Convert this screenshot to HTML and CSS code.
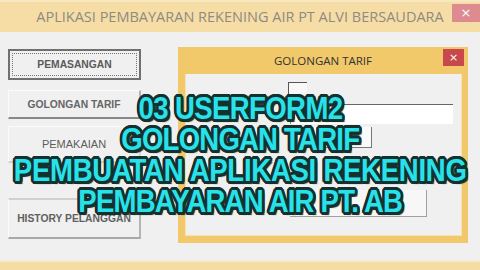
FILE: index.html
```html
<!DOCTYPE html>
<html>
<head>
<meta charset="utf-8">
<link rel="stylesheet" href="styles.css">
</head>
<body>
<div class="app">
  <div class="titlebar">
    <div class="title">APLIKASI PEMBAYARAN REKENING AIR PT ALVI BERSAUDARA</div>
    <div class="close main-close">×</div>
  </div>
  <div class="main">
    <div class="menu">
      <div class="btn btn-focus"><span class="focus-ring">PEMASANGAN</span></div>
      <div class="btn btn-gol">GOLONGAN TARIF</div>
      <div class="btn btn-pak">PEMAKAIAN</div>
      <div class="btn btn-his">HISTORY PELANGGAN</div>
    </div>
    <div class="win">
      <div class="win-title">
        <div class="win-caption">GOLONGAN TARIF</div>
        <div class="close win-close">×</div>
      </div>
      <div class="win-body">
        <div class="ctl ctl-label"></div>
        <div class="ctl ctl-text1"></div>
        <div class="ctl ctl-text2"></div>
        <div class="ctl ctl-btn"></div>
      </div>
    </div>
  </div>
  <div class="bottombar"></div>
</div>
<div class="overlay">
  <div class="ov-line ov1">03 USERFORM2</div>
  <div class="ov-line ov2">GOLONGAN TARIF</div>
  <div class="ov-line ov3">PEMBUATAN APLIKASI REKENING</div>
  <div class="ov-line ov4">PEMBAYARAN AIR PT. AB</div>
</div>
</body>
</html>
```

FILE: styles.css
```css
html, body {
  margin: 0;
  padding: 0;
}
body {
  width: 480px;
  height: 270px;
  overflow: hidden;
  position: relative;
  background: #f0f0f0;
  font-family: "Liberation Sans", Arial, sans-serif;
}
.app {
  display: flex;
  flex-direction: column;
  height: 270px;
}
.titlebar {
  height: 32px;
  flex: none;
  display: flex;
  background: #f6dda5;
  border-top: 2px solid #f8e8c2;
  box-sizing: border-box;
  padding-left: 28px;
}
.title {
  flex: 1;
  text-align: center;
  font-family: "Open Sans", sans-serif;
  font-size: 14.5px;
  line-height: 30px;
  color: #8e8b82;
  white-space: nowrap;
}
.close {
  color: #fff;
  text-align: center;
  font-family: "DejaVu Sans", sans-serif;
}
.main-close {
  width: 28px;
  height: 18px;
  margin-top: 2px;
  background: #dc8c90;
  font-size: 13px;
  line-height: 18px;
}
.main {
  flex: 1;
  display: flex;
  align-items: flex-start;
  padding: 16px 0 0 8px;
  background: #f0f0f0;
}
.menu {
  width: 133px;
  display: flex;
  flex-direction: column;
  margin-top: 1px;
}
.btn {
  box-sizing: border-box;
  display: flex;
  align-items: center;
  justify-content: center;
  font-size: 10.3px;
  font-weight: bold;
  color: #666;
  background: #f0f0f0;
  border-top: 1px solid #fbfbfb;
  border-left: 1px solid #fbfbfb;
  border-right: 2px solid #b4b4b4;
  border-bottom: 2px solid #a8a8a8;
}
.btn-focus {
  height: 31px;
  border: 2px solid #707070;
  padding: 2px;
  color: #5a5a5a;
}
.focus-ring {
  flex: 1;
  align-self: stretch;
  display: flex;
  align-items: center;
  justify-content: center;
  border: 1px dotted #777;
}
.btn-gol {
  height: 29px;
  margin-top: 10px;
  border-bottom-color: #888;
}
.btn-pak {
  height: 37px;
  margin-top: 7px;
  font-weight: normal;
  font-size: 11px;
  color: #5c5c5c;
  border-right-color: #d8d8d8;
  border-bottom-color: #d0d0d0;
}
.btn-his {
  height: 41px;
  margin-top: 35px;
  color: #606060;
  border-top: 2px solid #d0d0d0;
}
.win {
  width: 290px;
  margin-left: 37px;
  margin-top: -1px;
  display: flex;
  flex-direction: column;
}
.win-title {
  height: 27px;
  display: flex;
  background: #f1c86a;
  padding-left: 25px;
  padding-right: 4px;
}
.win-caption {
  flex: 1;
  text-align: center;
  font-family: "Open Sans", sans-serif;
  font-size: 11.5px;
  line-height: 27px;
  color: #333;
}
.win-close {
  width: 21px;
  height: 17px;
  margin-top: 2px;
  background: #c8484c;
  font-size: 11px;
  line-height: 17px;
}
.win-body {
  height: 169px;
  box-sizing: border-box;
  border: 6px solid #f1c86a;
  border-top: none;
  border-left-width: 7px;
  border-bottom-width: 7px;
  background: #f0f0f0;
  box-shadow: inset 1px 0 0 #f6e2b4, inset -1px -1px 0 #f6e2b4;
  padding: 8px 0 0 103px;
  display: flex;
  flex-direction: column;
  align-items: flex-start;
}
.ctl {
  box-sizing: border-box;
}
.ctl-label {
  width: 19px;
  height: 12px;
  border-top: 1px solid #555;
  border-left: 1px solid #555;
  background: #f8f8f8;
}
.ctl-text1 {
  width: 163px;
  height: 20px;
  margin-top: 10px;
  margin-left: 2px;
  background: #fff;
  border-top: 1px solid #666;
  border-left: 1px solid #888;
}
.ctl-text2 {
  width: 82px;
  height: 21px;
  margin-top: 3px;
  margin-left: 2px;
  background: #fafafa;
  border-right: 1px solid #777;
  border-bottom: 1px solid #777;
}
.ctl-btn {
  width: 137px;
  height: 27px;
  margin-top: 42px;
  margin-left: 2px;
  background: #f7f7f7;
  border-right: 1px solid #a0a0a0;
  border-bottom: 1px solid #a0a0a0;
}
.bottombar {
  height: 10px;
  flex: none;
  background: #f4dca4;
  border-top: 2px solid #f7ead0;
  box-sizing: border-box;
}
.overlay {
  position: absolute;
  left: 0;
  top: 93px;
  width: 480px;
  display: flex;
  flex-direction: column;
  align-items: center;
}
.ov-line {
  font-family: "Liberation Sans", Arial, sans-serif;
  font-weight: bold;
  font-size: 32px;
  line-height: 31px;
  letter-spacing: -0.3px;
  transform: scaleX(0.86);
  color: #28e2ea;
  white-space: nowrap;
  text-shadow:
    3px 0 0 #14302f, -3px 0 0 #14302f, 0 3px 0 #14302f, 0 -3px 0 #14302f,
    2px 2px 0 #14302f, -2px 2px 0 #14302f, 2px -2px 0 #14302f, -2px -2px 0 #14302f,
    3px 1px 0 #14302f, -3px 1px 0 #14302f, 3px -1px 0 #14302f, -3px -1px 0 #14302f,
    1px 3px 0 #14302f, -1px 3px 0 #14302f, 1px -3px 0 #14302f, -1px -3px 0 #14302f,
    3px 3px 1px #14302f;
}
.ov2, .ov4 {
  letter-spacing: -0.9px;
}
.ov1 {
  letter-spacing: -0.7px;
}
```
